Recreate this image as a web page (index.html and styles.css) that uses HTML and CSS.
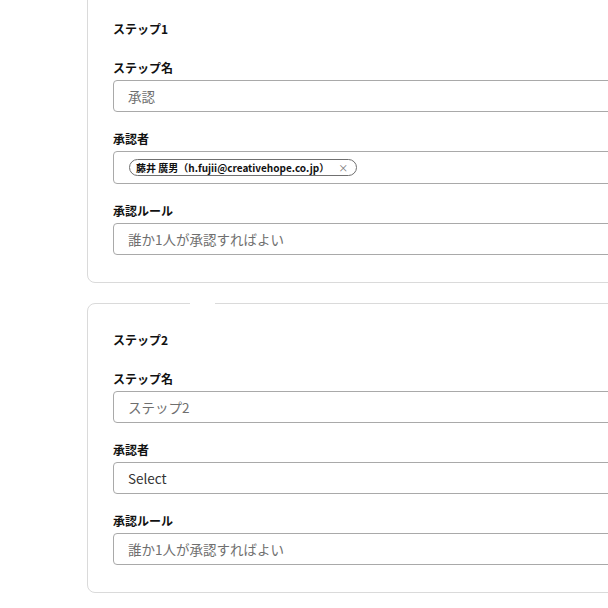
FILE: index.html
```html
<!DOCTYPE html>
<html lang="ja">
<head>
<meta charset="utf-8">
<link rel="stylesheet" href="styles.css">
</head>
<body>
<div class="page">
  <section class="card card-first">
    <div class="title">ステップ1</div>
    <div class="field">
      <div class="label">ステップ名</div>
      <div class="input">承認</div>
    </div>
    <div class="field">
      <div class="label">承認者</div>
      <div class="input input-chips">
        <span class="chip">藤井 廣男（h.fujii@creativehope.co.jp）<span class="chip-x">×</span></span>
      </div>
    </div>
    <div class="field">
      <div class="label">承認ルール</div>
      <div class="input">誰か1人が承認すればよい</div>
    </div>
  </section>
  <section class="card">
    <span class="notch"></span>
    <div class="title">ステップ2</div>
    <div class="field">
      <div class="label">ステップ名</div>
      <div class="input">ステップ2</div>
    </div>
    <div class="field">
      <div class="label">承認者</div>
      <div class="input input-select">Select</div>
    </div>
    <div class="field">
      <div class="label">承認ルール</div>
      <div class="input">誰か1人が承認すればよい</div>
    </div>
  </section>
</div>
</body>
</html>
```
FILE: styles.css
```css
html, body {
  margin: 0;
  padding: 0;
  background: #fff;
  overflow: hidden;
}
body {
  font-family: "Noto Sans CJK JP", "Noto Sans", sans-serif;
  color: #222;
}
.page {
  padding-left: 87px;
  margin-top: -8px;
  display: flex;
  flex-direction: column;
  gap: 20px;
}
.card {
  position: relative;
  box-sizing: border-box;
  width: 640px;
  border: 1px solid #dadada;
  border-radius: 8px;
  padding: 27px 25px 27px;
  display: flex;
  flex-direction: column;
}
.notch {
  position: absolute;
  top: -1px;
  left: 102px;
  width: 25px;
  height: 2px;
  background: #fff;
}
.title {
  font-size: 12px;
  font-weight: 700;
  line-height: 18px;
  color: #111;
  margin-bottom: 22px;
}
.field {
  display: flex;
  flex-direction: column;
  gap: 4px;
}
.field + .field {
  margin-top: 19px;
}
.label {
  font-size: 12px;
  font-weight: 700;
  line-height: 16px;
  color: #111;
}
.input {
  box-sizing: border-box;
  height: 32px;
  border: 1px solid #a9a9a9;
  border-radius: 4px;
  padding: 0 14px;
  display: flex;
  align-items: center;
  font-size: 13.5px;
  color: #6f6f6f;
}
.input-select {
  color: #333;
}
.input-chips {
  height: 33px;
  padding: 0 15px;
}
.chip {
  display: inline-flex;
  align-items: center;
  box-sizing: border-box;
  height: 17px;
  border: 1px solid #707070;
  border-radius: 9px;
  padding: 0 8px 0 6px;
  font-size: 10px;
  font-weight: 700;
  color: #111;
  line-height: 1;
}
.chip-x {
  margin-left: 9px;
  font-weight: 400;
  font-size: 10px;
  color: #777;
}
```
